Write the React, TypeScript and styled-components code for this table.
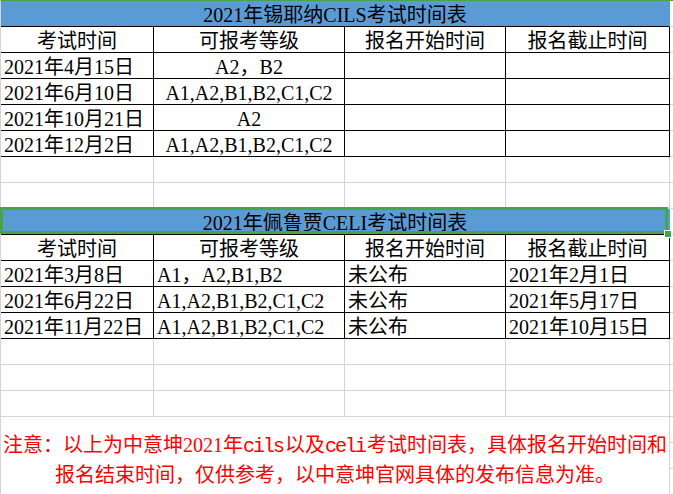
import React from 'react';
import styled, { createGlobalStyle } from 'styled-components';

const GRID = '#d4d4d4';
const INK = '#000';
const BLUE = '#5b9bd5';
const SELECT = '#47a447';

const GlobalStyle = createGlobalStyle`
  html, body {
    margin: 0;
    padding: 0;
    background: #fff;
    overflow: hidden;
  }
  body {
    font-family: "Liberation Serif", "Noto Sans CJK SC", serif;
  }
`;

const Sheet = styled.div`
  box-sizing: border-box;
  width: 673px;
  display: grid;
  grid-template-columns: 153px 191px 161px 164px 1fr;
  grid-auto-rows: 26px;
  border-top: 1px solid ${SELECT};
  border-left: 1px solid ${GRID};
`;

type CellProps = {
  $span?: number;
  $tall?: number;
  $center?: boolean;
  $ink?: boolean;
};

const Cell = styled.div<CellProps>`
  grid-column: span ${(p) => p.$span ?? 1};
  grid-row: span ${(p) => p.$tall ?? 1};
  box-sizing: border-box;
  min-width: 0;
  display: flex;
  align-items: center;
  justify-content: ${(p) => (p.$center ? 'center' : 'flex-start')};
  padding: 3px 3px 0;
  border-right: 1px solid ${(p) => (p.$ink ? INK : GRID)};
  border-bottom: 1px solid ${(p) => (p.$ink ? INK : GRID)};
  color: #000;
  font-size: 20px;
  line-height: 22px;
  white-space: nowrap;
  overflow: hidden;
`;

const Title = styled(Cell)<{ $selected?: boolean }>`
  position: relative;
  overflow: visible;
  background: ${BLUE};
  border-right-color: ${BLUE};
  border-bottom-color: ${INK};

  &::after {
    content: '';
    display: ${(p) => (p.$selected ? 'block' : 'none')};
    position: absolute;
    top: -2px;
    left: -1px;
    right: 1px;
    bottom: 0;
    border: 3px solid ${SELECT};
    z-index: 2;
  }

  &::before {
    content: '';
    display: ${(p) => (p.$selected ? 'block' : 'none')};
    position: absolute;
    right: -2px;
    bottom: -3px;
    width: 6px;
    height: 6px;
    background: ${SELECT};
    box-shadow: 0 0 0 1px #fff;
    z-index: 3;
  }
`;

const Note = styled(Cell)`
  flex-direction: column;
  justify-content: flex-start;
  align-items: center;
  padding: 14px 0 0;
  border-bottom: none;
  color: #ff0000;
  line-height: 29px;
`;

// half-width latin, like the sheet's song-style font
const Latin = styled.span`
  font-family: "Liberation Mono", monospace;
  letter-spacing: -2px;
  margin-right: 2px;
`;

const Spare = () => <Cell />;

const HEAD = ['考试时间', '可报考等级', '报名开始时间', '报名截止时间'];

const cils = [
  ['2021年4月15日', 'A2，B2', '', ''],
  ['2021年6月10日', 'A1,A2,B1,B2,C1,C2', '', ''],
  ['2021年10月21日', 'A2', '', ''],
  ['2021年12月2日', 'A1,A2,B1,B2,C1,C2', '', ''],
];

const celi = [
  ['2021年3月8日', 'A1，A2,B1,B2', '未公布', '2021年2月1日'],
  ['2021年6月22日', 'A1,A2,B1,B2,C1,C2', '未公布', '2021年5月17日'],
  ['2021年11月22日', 'A1,A2,B1,B2,C1,C2', '未公布', '2021年10月15日'],
];

type TableProps = {
  title: string;
  rows: string[][];
  centerLevels?: boolean;
  selected?: boolean;
};

const Schedule: React.FC<TableProps> = ({ title, rows, centerLevels, selected }) => (
  <>
    <Title $span={4} $center $selected={selected}>
      {title}
    </Title>
    <Spare />
    {HEAD.map((h) => (
      <Cell key={h} $ink $center>
        {h}
      </Cell>
    ))}
    <Spare />
    {rows.map((r) => (
      <React.Fragment key={r[0]}>
        {r.map((v, i) => (
          <Cell key={i} $ink $center={i === 1 && centerLevels}>
            {v}
          </Cell>
        ))}
        <Spare />
      </React.Fragment>
    ))}
  </>
);

const BlankRow = () => (
  <>
    <Cell />
    <Cell />
    <Cell />
    <Cell />
    <Spare />
  </>
);

const App: React.FC = () => (
  <>
    <GlobalStyle />
    <Sheet>
      <Schedule title="2021年锡耶纳CILS考试时间表" rows={cils} centerLevels />
      <BlankRow />
      <BlankRow />
      <Schedule title="2021年佩鲁贾CELI考试时间表" rows={celi} selected />
      <BlankRow />
      <BlankRow />
      <BlankRow />
      <Note $span={4} $tall={3}>
        <span>
          注意：以上为中意坤2021年<Latin>cils</Latin>以及<Latin>celi</Latin>考试时间表，具体报名开始时间和
        </span>
        <span>报名结束时间，仅供参考，以中意坤官网具体的发布信息为准。</span>
      </Note>
      <Spare />
      <Spare />
      <Spare />
    </Sheet>
  </>
);

export default App;
